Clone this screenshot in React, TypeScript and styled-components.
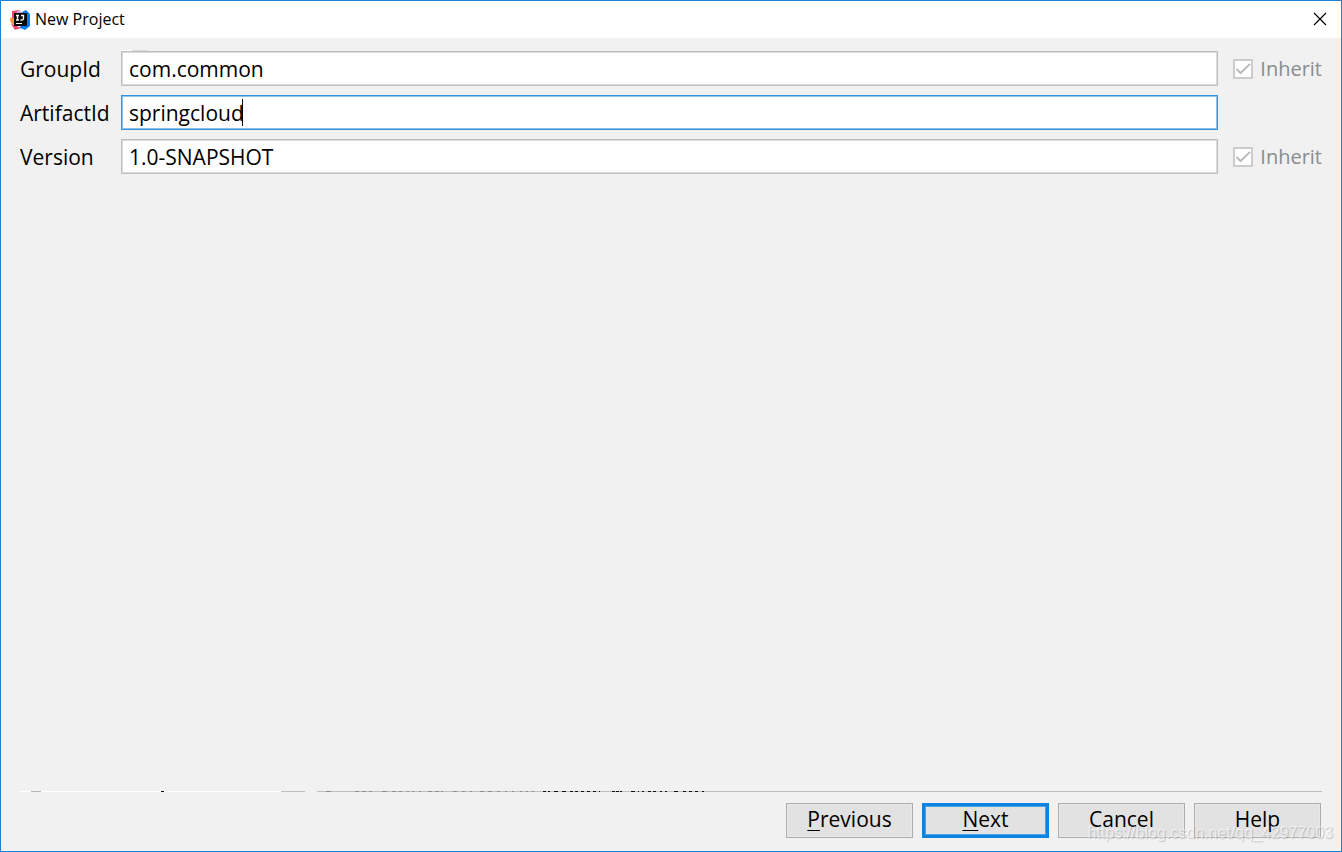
import React from "react";
import styled, { createGlobalStyle, css } from "styled-components";

const GlobalStyle = createGlobalStyle`
  *, *::before, *::after { box-sizing: border-box; }
  body {
    margin: 0;
    background: #f1f1f1;
    color: #000;
    font-family: "Open Sans", "Noto Sans", sans-serif;
    font-size: 21px;
    line-height: 28px;
  }
`;

const Window = styled.main`
  position: relative;
  display: flex;
  flex-direction: column;
  min-height: 100vh;
  border: 1px solid #1883d7;
  background: #f1f1f1;
`;

const TitleBar = styled.header`
  display: flex;
  align-items: center;
  height: 37px;
  padding: 0 14px 0 9px;
  background: #fff;
`;

const Title = styled.h1`
  flex: 1;
  margin: 0 0 0 5px;
  padding-bottom: 2px;
  font-size: 16px;
  font-weight: 400;
  line-height: 22px;
`;

const CloseButton = styled.button`
  display: flex;
  padding: 0 0 2px;
  border: 0;
  background: none;
`;

const Form = styled.form`
  position: relative;
  display: grid;
  grid-template-columns: 101px 1fr auto;
  row-gap: 9px;
  align-items: center;
  padding: 13px 19px 0;
`;

const PreviousEdge = styled.svg`
  position: absolute;
  top: 12px;
  left: 119px;
`;

const FieldLabel = styled.label``;

const Field = styled.div`
  position: relative;
`;

const TextInput = styled.input<{ $active?: boolean }>`
  display: block;
  width: 100%;
  height: 35px;
  padding: 0 7px;
  border: 1px solid ${(p) => (p.$active ? "#3393df" : "#c0c0c0")};
  border-radius: 0;
  box-shadow: inset 0 0 0 1px ${(p) => (p.$active ? "#8cc3ee" : "#dadada")};
  outline: none;
  background: #fff;
  color: #000;
  font: inherit;
`;

const Caret = styled.span`
  position: absolute;
  top: 4px;
  left: 121px;
  width: 1px;
  height: 27px;
  background: #000;
`;

const InheritLabel = styled.label`
  display: flex;
  align-items: center;
  gap: 7px;
  margin-left: 15px;
  color: #8c8c8c;
  font-size: 20px;
`;

const CheckBox = styled.input`
  appearance: none;
  width: 20px;
  height: 20px;
  margin: 0;
  border: 2px solid #cccccc;
  background: #fff;
`;

const BoxHolder = styled.span`
  display: grid;
  > * { grid-area: 1 / 1; }
`;

const Footer = styled.footer`
  margin-top: auto;
  padding: 0 19px 13px;
`;

const Divider = styled.div`
  position: relative;
  height: 1px;
  background: #bfbfbf;
`;

const DividerMarks = styled.svg`
  position: absolute;
  top: 0;
  left: 0;
`;

const Actions = styled.div`
  display: flex;
  justify-content: flex-end;
  gap: 9px;
  padding: 11px 1px 0 0;
`;

const ActionButton = styled.button<{ $primary?: boolean }>`
  width: 127px;
  height: 35px;
  padding: 0 0 2px;
  border: 1px solid #adadad;
  background: #e2e2e2;
  box-shadow: inset 0 0 0 1px #e9e9e9;
  color: #000;
  font: inherit;
  line-height: 27px;
  ${(p) =>
    p.$primary &&
    css`
      border: 3px solid #0a84e0;
      box-shadow: inset 0 0 0 1px #4ba3e3;
    `}
`;

const Mnemonic = styled.span`
  text-decoration: underline;
  text-decoration-thickness: 1px;
  text-underline-offset: 3px;
`;

const Watermark = styled.span`
  position: absolute;
  right: 8px;
  bottom: 8px;
  color: rgba(255, 255, 255, 0.6);
  font-family: "Liberation Sans", Arial, sans-serif;
  font-size: 16px;
  line-height: 20px;
  text-shadow: 1px 1px 1px rgba(130, 130, 130, 0.4);
  pointer-events: none;
`;

function IdeaLogo() {
  return (
    <svg width="20" height="20" viewBox="0 0 20 20" aria-hidden="true">
      <path d="M2 1 9 0 12 4 7 15 0 10 2 7Z" fill="#f0476c" />
      <path d="M0 8 4 8 4 15 1 13Z" fill="#f9953c" />
      <path d="M1 14 5 15 11 18 5 20Z" fill="#f0476c" />
      <path d="M12 2 16 0 20 4 20 16 15 20 10 18Z" fill="#087cf5" />
      <path d="M8 0 13 3 9 5 6 3Z" fill="#c9a0d8" />
      <rect x="4" y="3" width="13" height="13" fill="#0b0b0b" />
      <path
        d="M6 5.500H9M7.500 5.500V10M6 10H9M11 5.500H13.500V8.500Q13.500 10 12 10H10.500"
        fill="none"
        stroke="#fff"
        strokeWidth="1.300"
      />
      <rect x="6" y="13" width="6" height="1" fill="#fff" />
    </svg>
  );
}

function InheritOption({ id }: { id: string }) {
  return (
    <InheritLabel htmlFor={id}>
      <BoxHolder>
        <CheckBox id={id} type="checkbox" defaultChecked disabled />
        <svg width="20" height="20" viewBox="0 0 20 20" aria-hidden="true">
          <path d="M3.500 10 7.500 14 17 5" fill="none" stroke="#bcbcbc" strokeWidth="2" />
        </svg>
      </BoxHolder>
      Inherit
    </InheritLabel>
  );
}

const greyMarks = [
  [306, 5], [335, 4], [342, 4], [349, 3], [362, 5], [372, 4], [379, 3], [387, 2], [392, 2], [399, 2],
  [408, 4], [415, 4], [421, 2], [433, 4], [442, 3], [450, 2], [460, 4], [468, 4], [477, 3],
  [485, 2], [492, 2], [500, 2], [506, 2], [512, 2],
];
const blackMarks = [
  [523, 3], [528, 2], [534, 4], [542, 4], [550, 3], [555, 3], [561, 3], [567, 3], [573, 3],
  [579, 1], [592, 3], [596, 3], [600, 2], [611, 4], [618, 1], [622, 2], [628, 3], [633, 3],
  [640, 2], [645, 2], [654, 4], [663, 3], [669, 3], [675, 3], [682, 2],
];

export default function App() {
  return (
    <>
      <GlobalStyle />
      <Window>
        <TitleBar>
          <IdeaLogo />
          <Title>New Project</Title>
          <CloseButton type="button" aria-label="Close">
            <svg width="14" height="14" viewBox="0 0 14 14">
              <path d="M1 1 13 13M13 1 1 13" stroke="#000" strokeWidth="1.200" />
            </svg>
          </CloseButton>
        </TitleBar>
        <Form id="project" onSubmit={(e) => e.preventDefault()}>
          <PreviousEdge width="28" height="1" aria-hidden="true">
            <rect width="12" height="1" fill="#fff" />
            <rect x="12" width="16" height="1" fill="#dcdcdc" />
          </PreviousEdge>
          <FieldLabel htmlFor="group">GroupId</FieldLabel>
          <Field>
            <TextInput id="group" defaultValue="com.common" />
          </Field>
          <InheritOption id="inherit-group" />
          <FieldLabel htmlFor="artifact">ArtifactId</FieldLabel>
          <Field>
            <TextInput id="artifact" defaultValue="springcloud" spellCheck={false} $active />
            <Caret />
          </Field>
          <span />
          <FieldLabel htmlFor="version">Version</FieldLabel>
          <Field>
            <TextInput id="version" defaultValue="1.0-SNAPSHOT" />
          </Field>
          <InheritOption id="inherit-version" />
        </Form>
        <Footer>
          <Divider>
            <DividerMarks width="690" height="1" aria-hidden="true">
              <rect width="261" height="1" fill="#fff" />
              <rect x="11" width="10" height="1" fill="#b0b8bc" />
              <rect x="141" width="3" height="1" fill="#111" />
              <rect x="285" width="12" height="1" fill="#f1f1f1" />
              {greyMarks.map(([x, w]) => (
                <rect key={x} x={x} width={w} height="1" fill="#8c8c8c" />
              ))}
              {blackMarks.map(([x, w]) => (
                <rect key={x} x={x} width={w} height="1" fill="#111" />
              ))}
            </DividerMarks>
          </Divider>
          <Actions>
            <ActionButton type="button"><Mnemonic>P</Mnemonic>revious</ActionButton>
            <ActionButton type="submit" form="project" $primary><Mnemonic>N</Mnemonic>ext</ActionButton>
            <ActionButton type="button">Cancel</ActionButton>
            <ActionButton type="button">Help</ActionButton>
          </Actions>
        </Footer>
        <Watermark>https://blog.csdn.net/qq_42977003</Watermark>
      </Window>
    </>
  );
}
